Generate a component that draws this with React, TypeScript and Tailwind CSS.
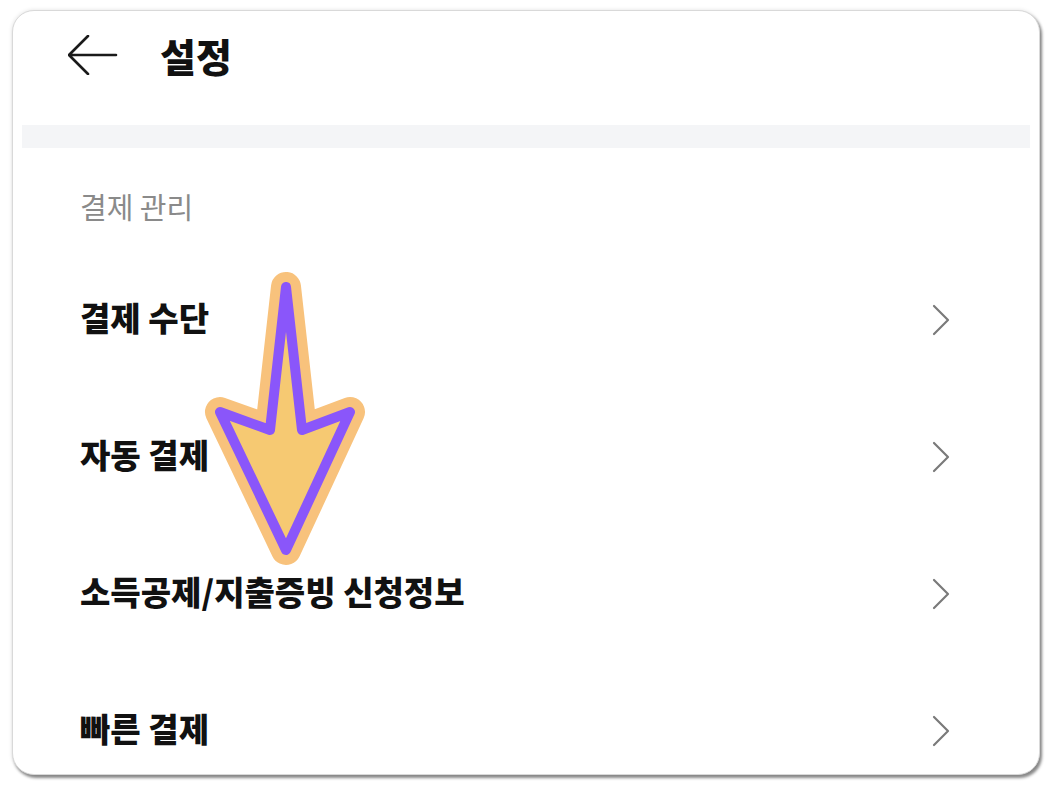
import React from "react";

const Chevron = () => (
  <svg width="20" height="32" viewBox="0 0 20 32" fill="none">
    <path d="M3 2 L17 16 L3 30" stroke="#7a7a7a" strokeWidth="2.2" strokeLinecap="round" strokeLinejoin="round" />
  </svg>
);

const rows = ["결제 수단", "자동 결제", "소득공제/지출증빙 신청정보", "빠른 결제"];

export default function App() {
  const pts = "286,287 302,430 350,412 286,550 220,412 270,430";
  return (
    <div
      className="relative w-[1052px] h-[787px] bg-white overflow-hidden"
      style={{ fontFamily: '"Noto Sans CJK KR", "Noto Sans", sans-serif' }}
    >
      <div className="absolute left-[12px] top-[10px] w-[1028px] h-[765px] rounded-[22px] bg-white border border-[#d9d9d9] shadow-[2px_3px_3px_rgba(0,0,0,0.45),0_0_4px_rgba(0,0,0,0.12)] overflow-hidden flex flex-col">
        <div className="h-[114px] shrink-0 flex items-center pl-[55px] pb-[26px]">
          <svg width="50" height="40" viewBox="0 0 50 40" fill="none">
            <path d="M1 20 H48 M20 1 L1 20 L20 39" stroke="#1a1a1a" strokeWidth="2.6" strokeLinecap="round" strokeLinejoin="round" />
          </svg>
          <span className="ml-[42px] text-[39px] font-black text-[#111] leading-none">설정</span>
        </div>
        <div className="mx-[9px] h-[23px] shrink-0 bg-[#f4f5f7]" />
        <div className="h-[103px] shrink-0 pl-[67px] pt-[44px]">
          <span className="text-[29px] leading-[28px] text-[#8a8a8a]">결제 관리</span>
        </div>
        {rows.map((r) => (
          <div key={r} className="h-[137px] shrink-0 flex items-center justify-between pl-[67px] pr-[88px]">
            <span className="text-[33px] font-black text-[#111] leading-none mb-[4px]">{r}</span>
            <Chevron />
          </div>
        ))}
      </div>
      <svg className="absolute left-0 top-0" width="1052" height="787" viewBox="0 0 1052 787">
        <polygon points={pts} fill="#f6c972" stroke="#f8c27c" strokeWidth="30" strokeLinejoin="round" />
        <polygon points={pts} fill="#f6c972" stroke="#8a56fa" strokeWidth="10" strokeLinejoin="round" />
      </svg>
    </div>
  );
}
